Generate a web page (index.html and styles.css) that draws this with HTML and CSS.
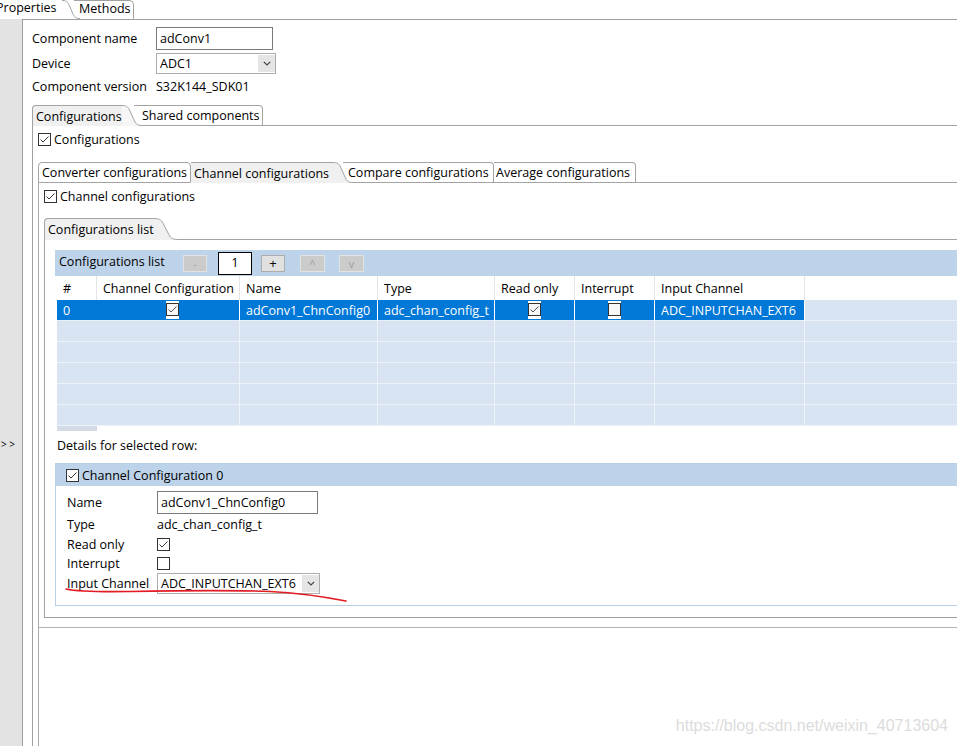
FILE: index.html
```html
<!DOCTYPE html>
<html>
<head>
<meta charset="utf-8">
<title>adConv1 Properties</title>
<link rel="stylesheet" href="styles.css">
</head>
<body>
<div class="app">
  <div class="topbar">
    <div class="ttab ttab-sel">Properties</div>
    <svg class="curve c-top" viewBox="0 0 20 21" preserveAspectRatio="none"><path class="cf cf-white" d="M0,0 L0,0.5 C4,0.5 6,1.5 7.5,5 L12.5,16 C14,19.5 16,20.5 20,20.5 L20,21 L0,21 Z"/><path class="cs" d="M0,0.5 C4,0.5 6,1.5 7.5,5 L12.5,16 C14,19.5 16,20.5 20,20.5"/></svg>
    <div class="ttab ttab-methods">Methods</div>
    <div class="tspace"></div>
  </div>
  <div class="body">
    <div class="sidebar"><span class="expand">&gt; &gt;</span></div>
    <div class="main">
      <div class="frow r1"><span class="flabel">Component name</span><span class="tbox w117">adConv1</span></div>
      <div class="frow r2"><span class="flabel">Device</span><span class="combo w120"><span class="ctext">ADC1</span><span class="carrow"><svg class="chev" viewBox="0 0 8 5"><path d="M0.8,0.8 L4,4 L7.2,0.8"/></svg></span></span></div>
      <div class="frow r3"><span class="flabel">Component version</span><span>S32K144_SDK01</span></div>

      <div class="folder f1">
        <div class="tabs">
          <div class="tab sel first t-conf">Configurations</div>
          <svg class="curve c-f1" viewBox="0 0 20 21" preserveAspectRatio="none"><path class="cf cf-light" d="M0,0 L0,0.5 C4,0.5 6,1.5 7.5,5 L12.5,16 C14,19.5 16,20.5 20,20.5 L20,21 L0,21 Z"/><path class="cs" d="M0,0.5 C4,0.5 6,1.5 7.5,5 L12.5,16 C14,19.5 16,20.5 20,20.5"/></svg>
          <div class="tab u t-shared">Shared components</div>
          <div class="tfill"></div>
        </div>
        <div class="fbody">
          <div class="chkrow"><span class="cb"><svg viewBox="0 0 11 11"><path d="M1.5,5.5 L4,8 L9.5,2.5"/></svg></span><span>Configurations</span></div>

          <div class="folder f2">
            <div class="tabs">
              <div class="tab u first t-conv">Converter configurations</div>
              <div class="tab sel t-chan">Channel configurations</div>
              <svg class="curve c-f2" viewBox="0 0 20 21" preserveAspectRatio="none"><path class="cf cf-gray" d="M0,0 L0,0.5 C4,0.5 6,1.5 7.5,5 L12.5,16 C14,19.5 16,20.5 20,20.5 L20,21 L0,21 Z"/><path class="cs" d="M0,0.5 C4,0.5 6,1.5 7.5,5 L12.5,16 C14,19.5 16,20.5 20,20.5"/></svg>
              <div class="tab u t-comp">Compare configurations</div>
              <div class="tab u t-avg">Average configurations</div>
              <div class="tfill"></div>
            </div>
            <div class="fbody">
              <div class="chkrow"><span class="cb"><svg viewBox="0 0 11 11"><path d="M1.5,5.5 L4,8 L9.5,2.5"/></svg></span><span>Channel configurations</span></div>

              <div class="folder f3">
                <div class="tabs">
                  <div class="tab sel first t-list">Configurations list</div>
                  <svg class="curve c-f3" viewBox="0 0 20 21" preserveAspectRatio="none"><path class="cf cf-gray" d="M0,0 L0,0.5 C4,0.5 6,1.5 7.5,5 L12.5,16 C14,19.5 16,20.5 20,20.5 L20,21 L0,21 Z"/><path class="cs" d="M0,0.5 C4,0.5 6,1.5 7.5,5 L12.5,16 C14,19.5 16,20.5 20,20.5"/></svg>
                  <div class="tfill"></div>
                </div>
                <div class="fbody">
                  <div class="lbar">
                    <span class="ltitle">Configurations list</span>
                    <span class="btn dis b-minus">-</span>
                    <span class="numbox">1</span>
                    <span class="btn en b-plus">+</span>
                    <span class="btn dis b-up">^</span>
                    <span class="btn dis b-down">v</span>
                  </div>
                  <div class="tbl">
                    <div class="trow th">
                      <div class="c">#</div>
                      <div class="c">Channel Configuration</div>
                      <div class="c">Name</div>
                      <div class="c">Type</div>
                      <div class="c">Read only</div>
                      <div class="c">Interrupt</div>
                      <div class="c">Input Channel</div>
                      <div class="c last"></div>
                    </div>
                    <div class="trow td selrow">
                      <div class="c s nob">0</div>
                      <div class="c s ctr ctr-cc"><span class="tcb"><span class="cb"><svg viewBox="0 0 11 11"><path d="M1.5,5.5 L4,8 L9.5,2.5"/></svg></span></span></div>
                      <div class="c s">adConv1_ChnConfig0</div>
                      <div class="c s">adc_chan_config_t</div>
                      <div class="c s ctr"><span class="tcb"><span class="cb"><svg viewBox="0 0 11 11"><path d="M1.5,5.5 L4,8 L9.5,2.5"/></svg></span></span></div>
                      <div class="c s ctr"><span class="tcb"><span class="cb"></span></span></div>
                      <div class="c s">ADC_INPUTCHAN_EXT6</div>
                      <div class="c last"></div>
                    </div>
                    <div class="trow td"><div class="c nob"></div><div class="c"></div><div class="c"></div><div class="c"></div><div class="c"></div><div class="c"></div><div class="c"></div><div class="c last"></div></div>
                    <div class="trow td"><div class="c nob"></div><div class="c"></div><div class="c"></div><div class="c"></div><div class="c"></div><div class="c"></div><div class="c"></div><div class="c last"></div></div>
                    <div class="trow td"><div class="c nob"></div><div class="c"></div><div class="c"></div><div class="c"></div><div class="c"></div><div class="c"></div><div class="c"></div><div class="c last"></div></div>
                    <div class="trow td"><div class="c nob"></div><div class="c"></div><div class="c"></div><div class="c"></div><div class="c"></div><div class="c"></div><div class="c"></div><div class="c last"></div></div>
                    <div class="trow td"><div class="c nob"></div><div class="c"></div><div class="c"></div><div class="c"></div><div class="c"></div><div class="c"></div><div class="c"></div><div class="c last"></div></div>
                    <div class="hs"><div class="thumb"></div></div>
                  </div>

                  <div class="dtitle">Details for selected row:</div>

                  <div class="grp">
                    <div class="ghead"><span class="cb"><svg viewBox="0 0 11 11"><path d="M1.5,5.5 L4,8 L9.5,2.5"/></svg></span><span>Channel Configuration 0</span></div>
                    <div class="gbody">
                      <div class="grow g1"><span class="glabel">Name</span><span class="tbox w161">adConv1_ChnConfig0</span></div>
                      <div class="grow g2"><span class="glabel">Type</span><span>adc_chan_config_t</span></div>
                      <div class="grow g3"><span class="glabel">Read only</span><span class="cb"><svg viewBox="0 0 11 11"><path d="M1.5,5.5 L4,8 L9.5,2.5"/></svg></span></div>
                      <div class="grow g3"><span class="glabel">Interrupt</span><span class="cb"></span></div>
                      <div class="grow g2"><span class="glabel">Input Channel</span><span class="combo w163"><span class="ctext">ADC_INPUTCHAN_EXT6</span><span class="carrow"><svg class="chev" viewBox="0 0 8 5"><path d="M0.8,0.8 L4,4 L7.2,0.8"/></svg></span></span></div>
                    </div>
                  </div>
                </div>
              </div>
              <div class="sep"></div>
            </div>
          </div>
        </div>
      </div>
    </div>
  </div>

  <svg class="ink" viewBox="0 0 957 746"><path d="M66,589 C80,592 100,592 130,591.5 C180,590.5 230,590 270,591.5 C300,593 325,597 346,601"/></svg>
  <div class="wm">https://blog.csdn.net/weixin_40713604</div>
</div>
</body>
</html>
```

FILE: styles.css
```css
* { box-sizing: border-box; }
html, body { margin: 0; padding: 0; }
body {
  background: #fff;
  font-family: "Open Sans", "Noto Sans", Arial, sans-serif;
  font-size: 12.5px;
  color: #000;
  line-height: 1.2;
}
.app {
  position: relative;
  width: 957px;
  height: 746px;
  overflow: hidden;
  display: flex;
  flex-direction: column;
}

/* top view tabs */
.topbar { flex: none; height: 19px; display: flex; margin-left: -4px; }
.ttab { flex: none; height: 19px; line-height: 16px; white-space: nowrap; background: #fff; }
.ttab-sel { width: 66px; }
.ttab-methods {
  width: 60px;
  padding-left: 5px;
  border-top: 1px solid #a0a0a0;
  border-right: 1px solid #a0a0a0;
  border-top-right-radius: 5px;
}
.tspace { flex: 1; }

.curve { flex: none; display: block; position: relative; z-index: 1; }
.c-top { width: 18px; height: 19px; margin-right: -6px; }
.c-f1 { width: 20px; height: 21px; margin-right: -8px; }
.c-f2 { width: 20px; height: 21px; margin-right: -10px; }
.c-f3 { width: 24px; height: 22px; }
.cs { fill: none; stroke: #a3a3a3; stroke-width: 1; vector-effect: non-scaling-stroke; }
.cf-white { fill: #fff; }
.cf-light { fill: #f6f6f6; }
.cf-gray { fill: #f0f0f0; }

/* body */
.body { flex: 1; display: flex; min-height: 0; }
.sidebar {
  flex: none;
  width: 23px;
  background: #e3e3e3;
  border-right: 1px solid #a0a0a0;
  padding-top: 419px;
  padding-left: 1px;
  font-size: 10px;
  line-height: 12px;
  white-space: nowrap;
}
.main {
  flex: 1;
  min-width: 0;
  border-top: 1px solid #a0a0a0;
  padding: 7px 0 0 9px;
  display: flex;
  flex-direction: column;
}

/* form */
.frow { display: flex; align-items: center; flex: none; white-space: nowrap; }
.r1 { height: 23px; }
.r2 { height: 21px; margin-top: 3px; }
.r3 { height: 20px; margin-top: 2px; margin-bottom: 9px; }
.flabel { width: 124px; flex: none; }
.tbox {
  flex: none;
  height: 23px;
  border: 1px solid #7a7a7a;
  padding-left: 3px;
  display: flex;
  align-items: center;
  background: #fff;
  white-space: nowrap;
}
.w117 { width: 117px; }
.w161 { width: 161px; }
.combo {
  flex: none;
  height: 21px;
  border: 1px solid #adadad;
  display: flex;
  background: #fff;
}
.w120 { width: 120px; }
.w163 { width: 163px; }
.combo .ctext { flex: 1; padding-left: 3px; display: flex; align-items: center; white-space: nowrap; overflow: hidden; }
.combo .carrow {
  flex: none;
  width: 17px;
  margin: 1px 0;
  background: #e5e5e5;
  display: flex;
  align-items: center;
  justify-content: center;
}
.chev { width: 8px; height: 5px; display: block; }
.chev path { fill: none; stroke: #444; stroke-width: 1.2; }

/* folders */
.folder { display: flex; flex-direction: column; flex: none; }
.f1 { flex: 1; }
.f2 { flex: 1; margin-top: 15px; }
.f3 { margin-top: 14px; }
.tabs { display: flex; flex: none; height: 21px; }
.f3 .tabs { height: 22px; }
.tab {
  flex: none;
  height: 100%;
  display: flex;
  align-items: center;
  white-space: nowrap;
  background: #fff;
}
.tab.u {
  border-top: 1px solid #a3a3a3;
  border-bottom: 1px solid #a3a3a3;
  border-right: 1px solid #a3a3a3;
  border-top-right-radius: 4px;
  overflow: hidden;
}
.tab.sel { border-top: 1px solid #a3a3a3; background: #f0f0f0; }
.tab.first { border-left: 1px solid #a3a3a3; border-top-left-radius: 4px; }
.tfill { flex: 1; border-bottom: 1px solid #a3a3a3; }

.t-conf { width: 90px; padding-left: 3px; background: #f6f6f6; }
.t-shared { width: 129px; padding-left: 8px; }
.t-conv { width: 153px; padding-left: 3px; }
.t-chan { width: 142px; padding-left: 3px; }
.t-comp { width: 151px; padding-left: 5px; }
.t-avg { width: 142px; padding-left: 2px; }
.t-list { width: 110px; padding-left: 3px; }

.fbody { flex: 1; display: flex; flex-direction: column; border-left: 1px solid #a0a0a0; }
.f1 > .fbody { padding: 6px 0 0 5px; }
.f2 > .fbody { padding: 6px 0 0 5px; border-left-color: #a9a9a9; }
.f3 > .fbody { flex: none; padding: 10px 0 11px 10px; border-bottom: 1px solid #a0a0a0; }
.sep { flex: none; margin-top: 9px; margin-left: -5px; border-top: 1px solid #b4b4b4; }

.chkrow { display: flex; align-items: center; height: 15px; flex: none; white-space: nowrap; }
.chkrow .cb { margin-right: 3px; }

/* checkbox */
.cb {
  flex: none;
  display: block;
  width: 13px;
  height: 13px;
  border: 1px solid #333;
  background: #fff;
}
.cb svg { display: block; width: 11px; height: 11px; }
.cb path { fill: none; stroke: #3a3a3a; stroke-width: 1; }

/* list toolbar */
.lbar {
  flex: none;
  height: 26px;
  background: #bdd3ea;
  display: flex;
  align-items: center;
  padding-left: 4px;
  white-space: nowrap;
}
.ltitle { width: 124px; flex: none; margin-top: -3px; }
.btn {
  flex: none;
  height: 17px;
  display: flex;
  align-items: center;
  justify-content: center;
  font-size: 11px;
  line-height: 1;
}
.btn.dis { background: #cbcbcb; border: 1px solid #e2e2e2; color: #9c9c9c; }
.btn.en { background: #e1e1e1; border: 1px solid #adadad; color: #000; font-size: 13px; }
.b-minus { width: 24px; }
.b-plus { width: 24px; margin-left: 9px; }
.b-up { width: 25px; margin-left: 15px; }
.b-down { width: 25px; margin-left: 14px; }
.numbox {
  flex: none;
  width: 34px;
  height: 23px;
  margin-left: 11px;
  background: #fff;
  border: 1px solid #000;
  display: flex;
  align-items: center;
  justify-content: center;
  font-size: 13px;
}

/* table */
.tbl { flex: none; margin-left: 2px; }
.trow {
  display: grid;
  grid-template-columns: 40px 143px 138px 117px 80px 80px 150px 1fr;
}
.th { height: 24px; background: #fff; }
.td { height: 21px; }
.c {
  display: flex;
  align-items: center;
  padding-left: 6px;
  white-space: nowrap;
  overflow: hidden;
}
.th .c { border-right: 1px solid #e5e5e5; }
.th .c.last { border-right: none; }
.td .c {
  background: #d8e4f2;
  border-right: 1px solid #eef3f9;
  border-bottom: 1px solid #eef3f9;
}
.td .c.nob { border-right: none; }
.td .c.last { border-right: none; }
.td .c.s { background: #0078d7; color: #fff; border-right-color: #fff; border-bottom-color: #e9eff7; }
.td .c.s.nob { border-right: none; }
.c.ctr { justify-content: center; padding-left: 0; }
.c.ctr-cc { padding-left: 9px; }
.tcb { display: block; width: 13px; height: 18px; background: #fff; padding: 2px 0 3px; }
.tcb .cb { background: #f7f7f7; }
.tcb .cb path { stroke: #555; }
.hs { height: 5px; }
.hs .thumb { width: 40px; height: 5px; background: #d3dbe6; }

.dtitle { flex: none; height: 22px; margin: 3px 0 7px 2px; display: flex; align-items: center; white-space: nowrap; }

/* details group */
.grp { flex: none; border: 1px solid #b9cfe8; border-right: none; }
.ghead {
  height: 22px;
  background: #bdd3ea;
  display: flex;
  align-items: center;
  padding-left: 10px;
  white-space: nowrap;
}
.ghead .cb { margin-right: 3px; }
.gbody { padding: 5px 0 11px 11px; }
.grow { display: flex; align-items: center; white-space: nowrap; }
.g1 { height: 23px; }
.g2 { height: 21px; }
.g3 { height: 19px; }
.glabel { width: 90px; flex: none; }

/* overlays */
.ink { position: absolute; left: 0; top: 0; width: 957px; height: 746px; pointer-events: none; }
.ink path { fill: none; stroke: #e31b23; stroke-width: 1.6; stroke-linecap: round; }
.wm {
  position: absolute;
  right: 9px;
  top: 716px;
  font-family: "Liberation Sans", Arial, sans-serif;
  font-size: 16px;
  color: #dcdcdc;
  white-space: nowrap;
}
```
